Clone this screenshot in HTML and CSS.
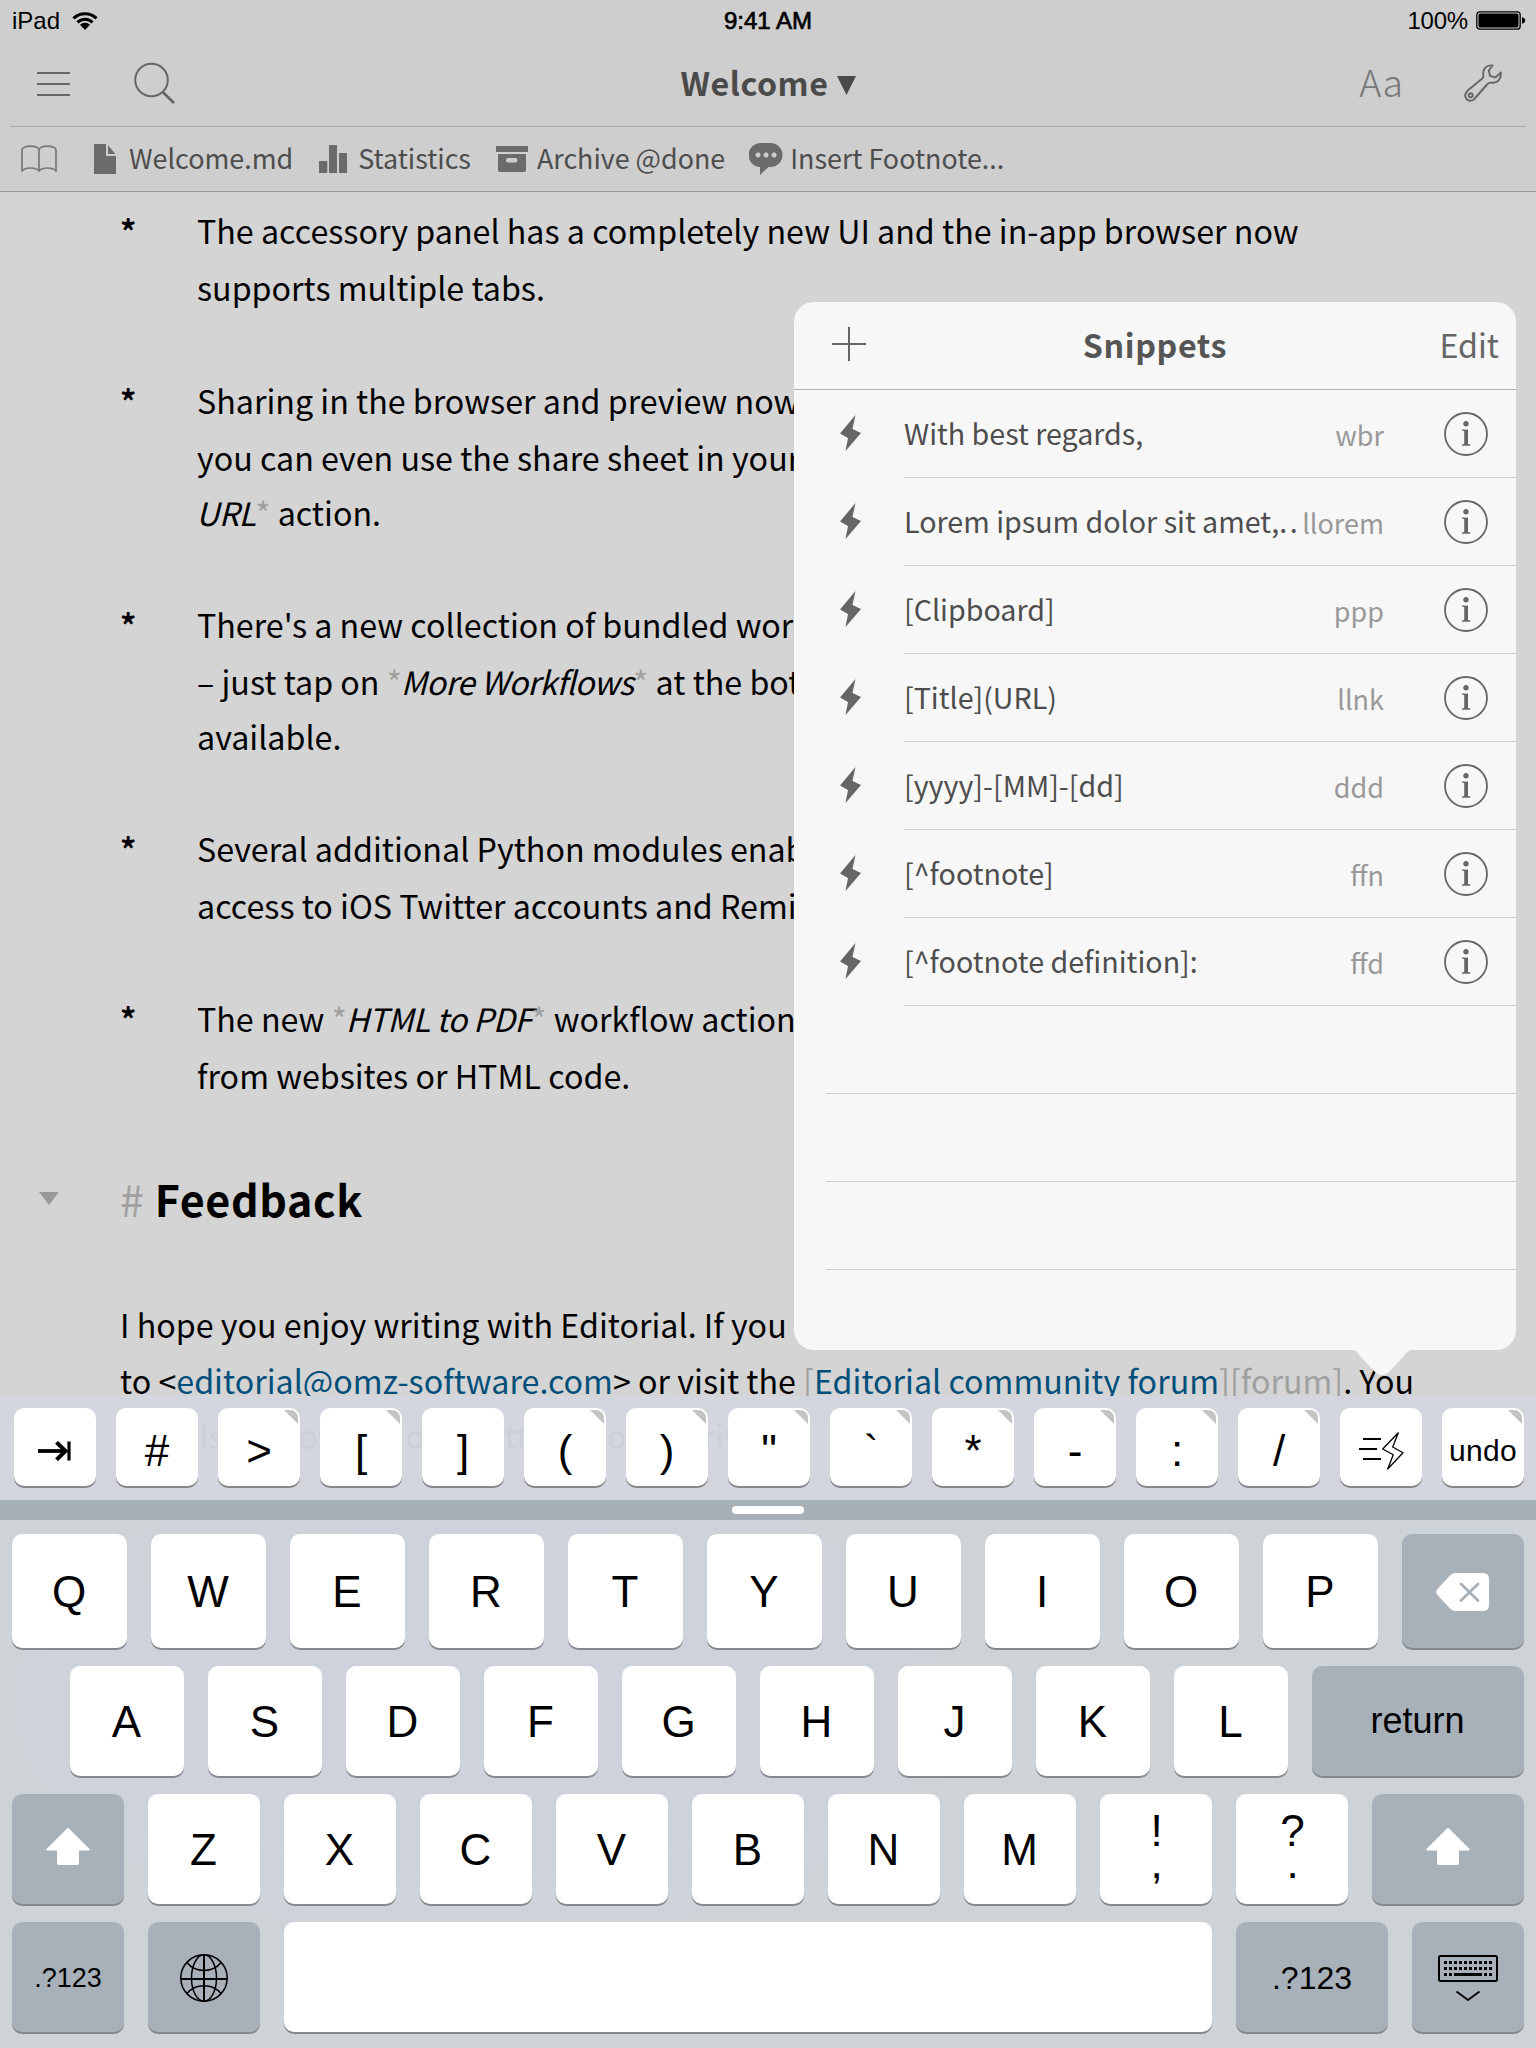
FILE: index.html
```html
<!DOCTYPE html>
<html lang="en">
<head>
<meta charset="utf-8">
<title>Editorial</title>
<link rel="stylesheet" href="styles.css">
</head>
<body>
<svg class="sprites" width="0" height="0" aria-hidden="true">
  <symbol id="bolt" viewBox="0 0 21 36"><path d="M15.5 0 0 18.500l8 4.500L5.500 36 21 18l-8.500-4z"/></symbol>
  <symbol id="info" viewBox="0 0 44 44"><circle cx="22" cy="22" r="21" fill="none" stroke="currentColor" stroke-width="1.8"/><circle cx="22" cy="11.700" r="2.700"/><path d="M18.200 17.500h5.800v14.800h2.200v1.500h-8.200v-1.500h2.200V19h-2z"/></symbol>
  <symbol id="shift" viewBox="0 0 44 38"><path d="M22 0.500 43.500 22q.8 1.500-1 1.500H33V36q0 2-2 2H13q-2 0-2-2V23.500H1.500q-1.800 0-1-1.500z"/></symbol>
</svg>
<div class="screen">
  <header class="chrome">
    <div class="status">
      <div class="status-left">iPad
        <svg width="26" height="18" viewBox="0 0 26 18"><path d="M1.500 6.300a16.500 16.500 0 0 1 23 0M5.500 10.400a10.700 10.700 0 0 1 15 0" fill="none" stroke="#000" stroke-width="3"/><path d="M13 18 8 12.800a7 7 0 0 1 10 0z"/></svg>
      </div>
      <div class="status-time">9:41 AM</div>
      <div class="status-right">100%
        <svg width="50" height="20" viewBox="0 0 50 20"><rect x=".8" y=".8" width="43.400" height="17.400" rx="3" fill="none" stroke="#000" stroke-width="1.300"/><rect x="2.500" y="2.500" width="40" height="14" rx="1.500"/><path d="M46 6.200q3.200.8 3.200 3.300T46 12.800z"/></svg>
      </div>
    </div>
    <nav class="navbar">
      <div class="nav-group nav-left">
        <svg width="34" height="26" viewBox="0 0 34 26"><path d="M1 3h33M1 14h33M1 25h33" stroke="currentColor" stroke-width="2"/></svg>
        <svg width="42" height="42" viewBox="0 0 42 42"><circle cx="17.500" cy="18" r="16.300" fill="none" stroke="currentColor" stroke-width="2"/><path d="m28.700 30 11.300 11" stroke="currentColor" stroke-width="2.800"/></svg>
      </div>
      <h1 class="nav-title">Welcome <svg width="19" height="19" viewBox="0 0 19 19"><path d="M0 0h19l-9.500 19z"/></svg></h1>
      <div class="nav-group nav-right">
        <span class="aa">Aa</span>
        <svg width="38" height="38" viewBox="0 0 38 38" fill="none" stroke="currentColor" stroke-width="1.900"><path d="M28.500 1.500C22.500.5 18.500 5 19.300 10.500c.2 1.500.2 2.800-1 4L4 26.200C-2 31.500 3 39 9 36c1-.5 1.500-1.200 2.200-2L23.500 20c1-1.100 2.300-1.500 4-1.300 6 .8 10-3.700 9.300-10.200L31.500 13.500 26 11.800 24.800 6.500z" stroke-linejoin="round"/><circle cx="6.700" cy="31.300" r="2"/></svg>
      </div>
    </nav>
    <div class="bookmarks">
      <svg class="book" width="36" height="28" viewBox="0 0 36 28" fill="none" stroke="currentColor" stroke-width="1.700"><path d="M18 4.500C16 0 3 0 1 4.500V26C4 22 15 22 18 26 21 22 32 22 35 26V4.500C33 0 20 0 18 4.500zV26" stroke-linejoin="round"/></svg>
      <span class="bm bm-file"><svg width="22" height="30" viewBox="0 0 22 30"><path d="M0 0h12v12h10v18H0zM14 1.500 21.500 10H14z"/></svg>Welcome.md</span>
      <span class="bm bm-stats"><svg width="28" height="28" viewBox="0 0 28 28"><path d="M0 16h8.300v12H0zM10 0h8v28h-8zM20 8h8v20h-8z"/></svg>Statistics</span>
      <span class="bm bm-archive"><svg width="32" height="26" viewBox="0 0 32 26"><path d="M0 0h32v6H0z"/><path fill-rule="evenodd" d="M2 8h28v16q0 2-2 2H4q-2 0-2-2zm10 4q-2 0-2 2.200T12 16.500h7.500q2 0 2-2.300T19.500 12z"/></svg>Archive @done</span>
      <span class="bm bm-note"><svg width="34" height="32" viewBox="0 0 34 32"><path fill-rule="evenodd" d="M12 0h9.500A12 12 0 0 1 21.500 24H19.500L11 32V24A12 12 0 0 1 12 0zM9 9.500a2.500 2.500 0 1 0 .1 0zm8 0a2.500 2.500 0 1 0 .1 0zm8 0a2.500 2.500 0 1 0 .1 0z"/></svg>Insert Footnote...</span>
    </div>
  </header>

  <main class="editor">
    <div class="item"><b class="star">*</b><div>
      <p>The accessory panel has a completely new UI and the in-app browser now</p>
      <p>supports multiple tabs.</p></div></div>
    <div class="item item-long"><b class="star">*</b><div>
      <p>Sharing in the browser and preview now</p>
      <p>you can even use the share sheet in your</p>
      <p class="tight"><i>URL</i><s>*</s> action.</p></div></div>
    <div class="item item-long"><b class="star">*</b><div>
      <p>There's a new collection of bundled workflows</p>
      <p>– just tap on <s>*</s><i>More Workflows</i><s>*</s> at the bottom</p>
      <p class="tight">available.</p></div></div>
    <div class="item"><b class="star">*</b><div>
      <p>Several additional Python modules enable</p>
      <p>access to iOS Twitter accounts and Reminders</p></div></div>
    <div class="item"><b class="star">*</b><div>
      <p>The new <s>*</s><i>HTML to PDF</i><s>*</s> workflow actions</p>
      <p>from websites or HTML code.</p></div></div>
    <h2 class="heading"><svg width="20" height="13" viewBox="0 0 20 13"><path d="M0 0h20L10 13z"/></svg><s>#</s> Feedback</h2>
    <div class="para">
      <p>I hope you enjoy writing with Editorial. If you</p>
      <p class="tight">to &lt;<a>editorial@omz-software.com</a>&gt; or visit the <s>[</s><a>Editorial community forum</a><s>][forum]</s>. You</p>
      <p class="tight">can also follow me on Twitter (@olemoritz</p>
    </div>
  </main>

  <section class="accessory">
    <div class="akey"><svg width="34" height="20" viewBox="0 0 34 20" fill="none" stroke="#000"><path d="M0 10h28" stroke-width="3.800"/><path d="m18.500 1.300 9 8.700-9 8.700" stroke-width="4"/><path d="M31 .5v19" stroke-width="3.200"/></svg></div>
    <div class="akey">#</div>
    <div class="akey more">&gt;</div>
    <div class="akey more">[</div>
    <div class="akey">]</div>
    <div class="akey more">(</div>
    <div class="akey more">)</div>
    <div class="akey more">"</div>
    <div class="akey more">`</div>
    <div class="akey more">*</div>
    <div class="akey more">-</div>
    <div class="akey more">:</div>
    <div class="akey more">/</div>
    <div class="akey snip"><svg width="45" height="38" viewBox="0 0 45 38" fill="none" stroke="#000"><path d="M4 7h18M0 17h18M4 27h18" stroke-width="2"/><path d="M39.300.8 23.700 17l10.600 5.700L28.700 37 44 20.700 33.700 15z" stroke-width="1.300" stroke-linejoin="round"/></svg></div>
    <div class="akey more undo">undo</div>
  </section>
  <div class="grip"><span></span></div>

  <section class="keyboard">
    <div class="krow row1">
      <div class="key">Q</div><div class="key">W</div><div class="key">E</div><div class="key">R</div><div class="key">T</div><div class="key">Y</div><div class="key">U</div><div class="key">I</div><div class="key">O</div><div class="key">P</div>
      <div class="key dark"><svg width="54" height="38" viewBox="0 0 54 38"><path d="M20 0h27q6 0 6 6v26q0 6-6 6H20q-4 0-6.500-3L1.500 22q-2.500-3 0-6l12-13Q16 0 20 0z" fill="#fff"/><path d="m25 11 17 16.500M42 11 25 27.500" stroke="#a8b0ba" stroke-width="2.800" stroke-linecap="round"/></svg></div>
    </div>
    <div class="krow row2">
      <div class="key">A</div><div class="key">S</div><div class="key">D</div><div class="key">F</div><div class="key">G</div><div class="key">H</div><div class="key">J</div><div class="key">K</div><div class="key">L</div>
      <div class="key dark return">return</div>
    </div>
    <div class="krow row3">
      <div class="key dark"><svg class="shift" width="44" height="38"><use href="#shift"/></svg></div>
      <div class="key">Z</div><div class="key">X</div><div class="key">C</div><div class="key">V</div><div class="key">B</div><div class="key">N</div><div class="key">M</div>
      <div class="key dual"><span>!</span><span>,</span></div><div class="key dual"><span>?</span><span>.</span></div>
      <div class="key dark"><svg class="shift" width="44" height="38"><use href="#shift"/></svg></div>
    </div>
    <div class="krow row4">
      <div class="key dark num-small">.?123</div>
      <div class="key dark"><svg width="48" height="48" viewBox="0 0 48 48" fill="none" stroke="#000" stroke-width="1.500"><circle cx="24" cy="24" r="23.200"/><ellipse cx="24" cy="24" rx="12.500" ry="23.200"/><path d="M7 8.500c8 10.500 26 10.500 34 0M7 39.500c8-10.500 26-10.500 34 0"/><path d="M24 .8v46.400M.8 25h46.400" stroke-width="2"/></svg></div>
      <div class="key"></div>
      <div class="key dark num-large">.?123</div>
      <div class="key dark"><svg width="60" height="46" viewBox="0 0 60 46" fill="none" stroke="#000"><rect x="1" y="1" width="58" height="25" rx="1.500" stroke-width="2"/><path d="M6 7.500h48M6 13.500h48" stroke-width="3" stroke-dasharray="3 2"/><path d="M6 19.500h9M46 19.500h9" stroke-width="3" stroke-dasharray="3 2"/><path d="M16 19.500h28" stroke-width="3"/><path d="m18.500 36.500 11.500 8.500 11.500-8.500" stroke-width="1.800"/></svg></div>
    </div>
  </section>

  <aside class="popover">
    <div class="pop-head">
      <svg width="34" height="34" viewBox="0 0 34 34"><path d="M17 0v34M0 17h34" stroke="currentColor" stroke-width="2"/></svg>
      <h3>Snippets</h3><span class="edit">Edit</span>
    </div>
    <div class="snippet"><svg class="bolt"><use href="#bolt"/></svg><div class="cell"><span class="name">With best regards,</span><span class="tag">wbr</span><svg class="info"><use href="#info"/></svg></div></div>
    <div class="snippet"><svg class="bolt"><use href="#bolt"/></svg><div class="cell"><span class="name">Lorem ipsum dolor sit amet,<span class="dots">..</span></span><span class="tag">llorem</span><svg class="info"><use href="#info"/></svg></div></div>
    <div class="snippet"><svg class="bolt"><use href="#bolt"/></svg><div class="cell"><span class="name">[Clipboard]</span><span class="tag">ppp</span><svg class="info"><use href="#info"/></svg></div></div>
    <div class="snippet"><svg class="bolt"><use href="#bolt"/></svg><div class="cell"><span class="name">[Title](URL)</span><span class="tag">llnk</span><svg class="info"><use href="#info"/></svg></div></div>
    <div class="snippet"><svg class="bolt"><use href="#bolt"/></svg><div class="cell"><span class="name">[yyyy]-[MM]-[dd]</span><span class="tag">ddd</span><svg class="info"><use href="#info"/></svg></div></div>
    <div class="snippet"><svg class="bolt"><use href="#bolt"/></svg><div class="cell"><span class="name">[^footnote]</span><span class="tag">ffn</span><svg class="info"><use href="#info"/></svg></div></div>
    <div class="snippet"><svg class="bolt"><use href="#bolt"/></svg><div class="cell"><span class="name">[^footnote definition]:</span><span class="tag">ffd</span><svg class="info"><use href="#info"/></svg></div></div>
    <div class="blank"></div><div class="blank"></div><div class="blank"></div>
    <svg class="arrow" width="74" height="27" viewBox="0 0 74 27"><path d="M0 0C9 0 12 2 15 7l15 16q7 6.500 14 0L59 7C62 2 65 0 74 0z" fill="#f7f7f7"/></svg>
  </aside>
</div>
</body>
</html>
```
FILE: styles.css
```css
* { box-sizing: border-box; margin: 0; padding: 0; }
body {
  width: 1536px;
  height: 2048px;
  overflow: hidden;
  background: #d4d4d4;
  color: #000;
  font-family: "Noto Sans CJK SC", sans-serif;
}
svg { display: block; flex: none; }
s { text-decoration: none; color: #a0a0a0; }
.sprites { position: absolute; }
.screen { position: relative; width: 1536px; height: 2048px; display: flex; flex-direction: column; overflow: hidden; }

/* Top bars */
.chrome { height: 192px; flex: none; background: #cecece; border-bottom: 1px solid #999; color: #666; }
.status {
  height: 40px;
  display: grid;
  grid-template-columns: 1fr auto 1fr;
  align-items: center;
  padding: 1px 10px 0 12px;
  font: 24px "Liberation Sans", sans-serif;
  color: #000;
}
.status-left, .status-right { display: flex; align-items: center; gap: 12px; }
.status-right { justify-content: flex-end; gap: 8px; letter-spacing: -0.2px; }
.status-time { -webkit-text-stroke: 0.7px #000; margin-left: -2px; }
.navbar {
  height: 87px;
  margin: 0 10px;
  border-bottom: 1px solid #a9a9a9;
  display: grid;
  grid-template-columns: 1fr auto 1fr;
  align-items: center;
  padding: 0 24px 0 26px;
}
.nav-group { display: flex; align-items: center; }
.nav-left { gap: 64px; }
.nav-right { justify-content: flex-end; gap: 61px; }
.nav-title { display: flex; align-items: center; gap: 9px; margin: -3px 0 0 -1px; font-size: 32.23px; font-weight: 600; line-height: 48px; letter-spacing: 0.5px; color: #4a4a4a; }
.nav-title svg { fill: #4a4a4a; margin-top: 7px; }
.aa { font-size: 37.5px; font-weight: 300; line-height: 48px; color: #777; margin-top: -4px; }
.bookmarks { height: 64px; display: flex; align-items: center; padding-left: 21px; font-size: 26.86px; line-height: 40px; color: #4d4d4d; }
.bookmarks svg { fill: #6b6b6b; margin-top: 2px; }
.bookmarks .book { fill: none; color: #777; margin-top: 0; }
.bm { display: flex; align-items: center; margin-top: -2px; }
.bm-file { margin-left: 37px; gap: 13px; }
.bm-stats { margin-left: 26px; gap: 11px; }
.bm-archive { margin-left: 25px; gap: 9px; }
.bm-note { margin-left: 24px; gap: 7px; }

/* Editor text */
.editor { height: 1204px; flex: none; padding: 10px 0 0 120px; font-size: 32.23px; line-height: 57px; white-space: nowrap; }
.item { display: flex; height: 170px; }
.item-long { height: 224px; }
.item i { letter-spacing: -0.6px; margin-left: -1px; }
.star { width: 77px; flex: none; }
.tight { line-height: 55px; }
.item-long .tight { line-height: 53px; }
.editor a { color: #004f7a; }
.heading { display: flex; align-items: center; height: 80px; margin: -2px 0 0 -81px; font-size: 43px; line-height: 60px; font-weight: 600; letter-spacing: 0.6px; white-space: pre; }
.heading svg { fill: #999; margin-right: 61px; }
.heading s { font-weight: 400; }
.para { margin-top: 58px; }

/* Accessory key strip */
.accessory {
  position: relative;
  height: 104px;
  flex: none;
  display: flex;
  gap: 20px;
  padding: 12px 12px 0 14px;
  background: rgba(211, 214, 223, 0.97);
  font-family: "Liberation Sans", sans-serif;
}
.akey {
  position: relative;
  width: 82px;
  height: 78px;
  flex: none;
  display: flex;
  align-items: center;
  justify-content: center;
  background: #fff;
  border-radius: 10px;
  box-shadow: 0 2px 0 #85878a;
  font-size: 44px;
  line-height: 60px;
  padding-top: 7px;
}
.more::after {
  content: "";
  position: absolute;
  top: 2px;
  right: 2px;
  width: 14px;
  height: 14px;
  background: #c4c4c4;
  border-top-right-radius: 8px;
  clip-path: polygon(0 0, 100% 0, 100% 100%);
}
.undo { font-size: 30px; letter-spacing: 0.3px; }
.grip { position: relative; height: 20px; flex: none; background: #a7afb9; display: flex; align-items: center; justify-content: center; }
.grip span { width: 72px; height: 8px; border-radius: 4px; background: #fff; }

/* Keyboard */
.keyboard {
  height: 528px;
  flex: none;
  display: flex;
  flex-direction: column;
  gap: 18px;
  padding: 14px 12px 0;
  background: radial-gradient(ellipse 560px 290px at 480px 180px, #ced2dc 60%, #ced3d7 90%);
  font: 44px "Liberation Sans", sans-serif;
}
.krow { display: grid; column-gap: 24px; height: 110px; }
.row1 { height: 114px; grid-template-columns: repeat(10, 115px) 122px; }
.row2 { padding-left: 58px; grid-template-columns: repeat(9, 114px) 212px; }
.row3 { grid-template-columns: repeat(10, 112px) 152px; }
.row4 { grid-template-columns: 112px 112px 928px 152px 112px; }
.key {
  display: flex;
  align-items: center;
  justify-content: center;
  background: #fff;
  border-radius: 10px;
  box-shadow: 0 2px 0 #85898e;
  padding: 2px 1px 0 0;
}
.dark { background: #a8b0ba; }
.return { font-size: 36px; padding-top: 0; }
.dual { flex-direction: column; line-height: 32px; padding: 0 0 4px 1px; }
.shift { fill: #fff; margin-bottom: 8px; }
.num-small { font-size: 27px; padding: 2px 0 0; }
.num-large { font-size: 32px; padding: 2px 0 0; }

/* Snippets popover */
.popover { position: absolute; left: 794px; top: 302px; width: 722px; height: 1048px; border-radius: 20px; background: #f7f7f7; color: #666; }
.pop-head {
  height: 88px;
  display: grid;
  grid-template-columns: 1fr auto 1fr;
  align-items: center;
  border-bottom: 1px solid #b2b2b2;
  padding: 0 17px 4px;
}
.pop-head svg { margin-left: 21px; }
.pop-head h3 { font-size: 32.23px; font-weight: 600; line-height: 48px; letter-spacing: 0.6px; color: #555; }
.edit { justify-self: end; font-size: 32.23px; line-height: 48px; }
.snippet { display: flex; height: 88px; padding-left: 46px; }
.bolt { width: 21px; height: 36px; margin: 25px 43px 0 0; fill: #666; }
.cell { flex: 1; display: flex; align-items: center; border-bottom: 1px solid #ccc; padding-right: 28px; white-space: nowrap; }
.name { flex: 1; margin-top: -2px; font-size: 28.65px; line-height: 40px; color: #4d4d4d; }
.dots { letter-spacing: 2.5px; }
.tag { font-size: 27px; line-height: 40px; color: #999; margin: 3px 60px 0 0; }
.info { width: 44px; height: 44px; fill: #666; color: #666; }
.blank { height: 88px; margin-left: 32px; border-bottom: 1px solid #ccc; }
.arrow { position: absolute; left: 551px; top: 1047px; }
```
